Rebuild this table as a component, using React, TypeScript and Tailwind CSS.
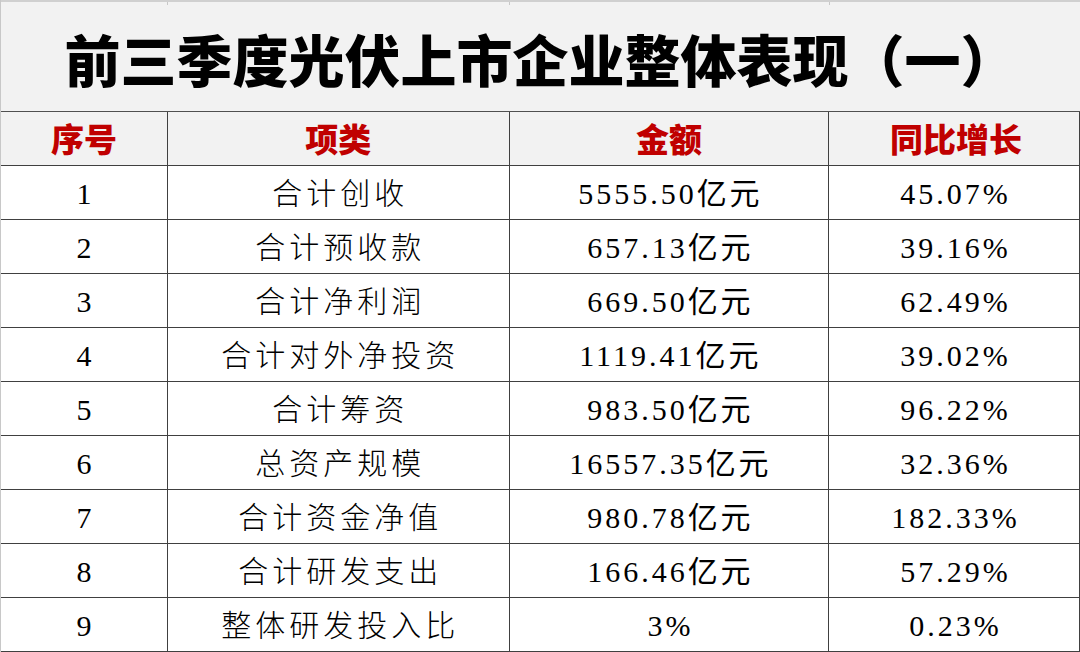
import React from 'react'

const rows = [
  { no: '1', item: '合计创收', amount: '5555.50亿元', growth: '45.07%' },
  { no: '2', item: '合计预收款', amount: '657.13亿元', growth: '39.16%' },
  { no: '3', item: '合计净利润', amount: '669.50亿元', growth: '62.49%' },
  { no: '4', item: '合计对外净投资', amount: '1119.41亿元', growth: '39.02%' },
  { no: '5', item: '合计筹资', amount: '983.50亿元', growth: '96.22%' },
  { no: '6', item: '总资产规模', amount: '16557.35亿元', growth: '32.36%' },
  { no: '7', item: '合计资金净值', amount: '980.78亿元', growth: '182.33%' },
  { no: '8', item: '合计研发支出', amount: '166.46亿元', growth: '57.29%' },
  { no: '9', item: '整体研发投入比', amount: '3%', growth: '0.23%' },
]

const cols = ['w-[167px]', 'w-[342px]', 'w-[320px]', 'w-[251px]']

export default function App() {
  return (
    <div className="w-[1080px] h-[652px] overflow-hidden bg-white border-l border-[#c8c8c8]">
      {/* title */}
      <div className="relative h-[112px] bg-[#f2f2f2] border-t-2 border-[#d0d0d0] border-b border-b-[#505050] flex items-center justify-center">
        <div className="absolute left-0 top-0 flex h-[3px]">
          {cols.map((c, i) => (
            <div key={i} className={`${c} h-full border-r border-[#c8c8c8]`} />
          ))}
        </div>
        <h1 className="font-['Noto_Sans_CJK_SC',sans-serif] font-black text-[56px] leading-none text-black pt-[2px]">
          前三季度光伏上市企业整体表现（一）
        </h1>
      </div>

      {/* header */}
      <div className="flex h-[54px] bg-[#f2f2f2] border-b border-[#404040] font-['Noto_Sans_CJK_SC',sans-serif] font-black text-[33px] text-[#c00000]">
        <div className={`${cols[0]} flex items-center justify-center border-r border-[#404040]`}>序号</div>
        <div className={`${cols[1]} flex items-center justify-center border-r border-[#404040]`}>项类</div>
        <div className={`${cols[2]} flex items-center justify-center border-r border-[#404040]`}>金额</div>
        <div className={`${cols[3]} flex items-center justify-center border-r border-[#404040] pl-[4px]`}>同比增长</div>
      </div>

      {rows.map((r) => (
        <div
          key={r.no}
          className="flex h-[54px] border-b border-[#404040] text-black font-['Liberation_Serif','Noto_Sans_CJK_SC',serif] text-[30px] leading-none"
        >
          <div className={`${cols[0]} flex items-center justify-center border-r border-[#404040] pt-[3px]`}>{r.no}</div>
          <div className={`${cols[1]} flex items-center justify-center border-r border-[#404040] tracking-[4px] pl-[4px] pt-[3px] font-light`}>
            {r.item}
          </div>
          <div className={`${cols[2]} flex items-center justify-center border-r border-[#404040] tracking-[3px] pl-[3px] pt-[3px]`}>
            {r.amount}
          </div>
          <div className={`${cols[3]} flex items-center justify-center border-r border-[#404040] tracking-[3px] pl-[3px] pt-[3px]`}>
            {r.growth}
          </div>
        </div>
      ))}
    </div>
  )
}
